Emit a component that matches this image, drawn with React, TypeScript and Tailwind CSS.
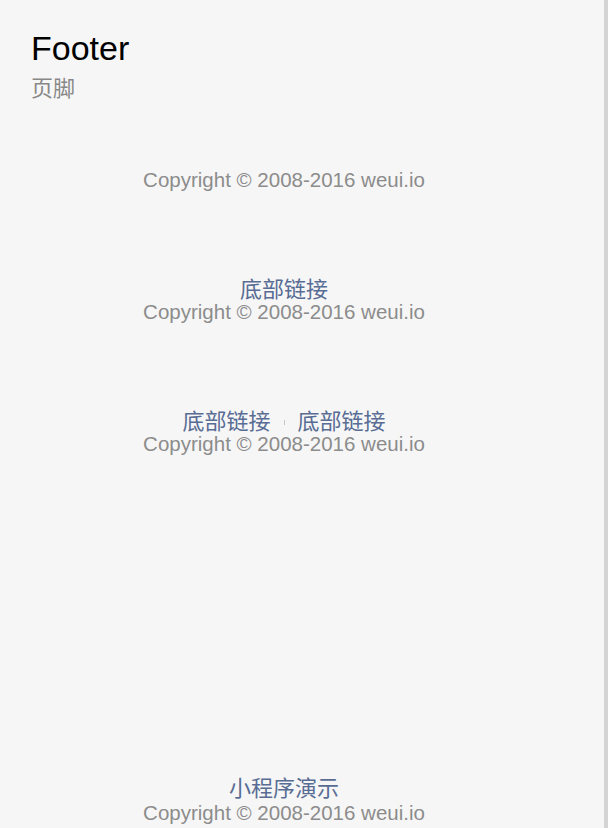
const font = "font-['Liberation_Sans','Noto_Sans_CJK_SC',sans-serif]"

function Copyright() {
  return (
    <p className="text-[20.5px] leading-[22px] text-[#8c8c8c]">
      Copyright © 2008-2016 weui.io
    </p>
  )
}

function FooterLink({ children }: { children: string }) {
  return (
    <a href="#" className="text-[22px] leading-[22px] text-[#586c94]">
      {children}
    </a>
  )
}

export default function App() {
  return (
    <div className={`flex h-[828px] bg-[#f6f6f6] ${font}`}>
      <main className="flex w-[604px] flex-col">
        <header className="pl-[31px] pt-[31px]">
          <h1 className="text-[34px] leading-[34px] text-black">Footer</h1>
          <p className="mt-[13px] text-[22px] leading-[22px] text-[#888]">页脚</p>
        </header>

        <div className="flex w-[568px] flex-col items-center text-center">
          <div className="mt-[69px]">
            <Copyright />
          </div>

          <div className="mt-[88px] flex flex-col items-center">
            <FooterLink>底部链接</FooterLink>
            <Copyright />
          </div>

          <div className="mt-[88px] flex flex-col items-center">
            <div className="flex items-center gap-[13px]">
              <FooterLink>底部链接</FooterLink>
              <span className="h-[5px] w-px bg-[#c7c7c7]" />
              <FooterLink>底部链接</FooterLink>
            </div>
            <Copyright />
          </div>
        </div>

        <div className="mt-auto flex w-[568px] flex-col items-center pb-[4px] text-center">
          <div className="-mb-px">
            <FooterLink>小程序演示</FooterLink>
          </div>
          <Copyright />
        </div>
      </main>
      <div className="w-[4px] bg-[#d4d4d4]" />
    </div>
  )
}
